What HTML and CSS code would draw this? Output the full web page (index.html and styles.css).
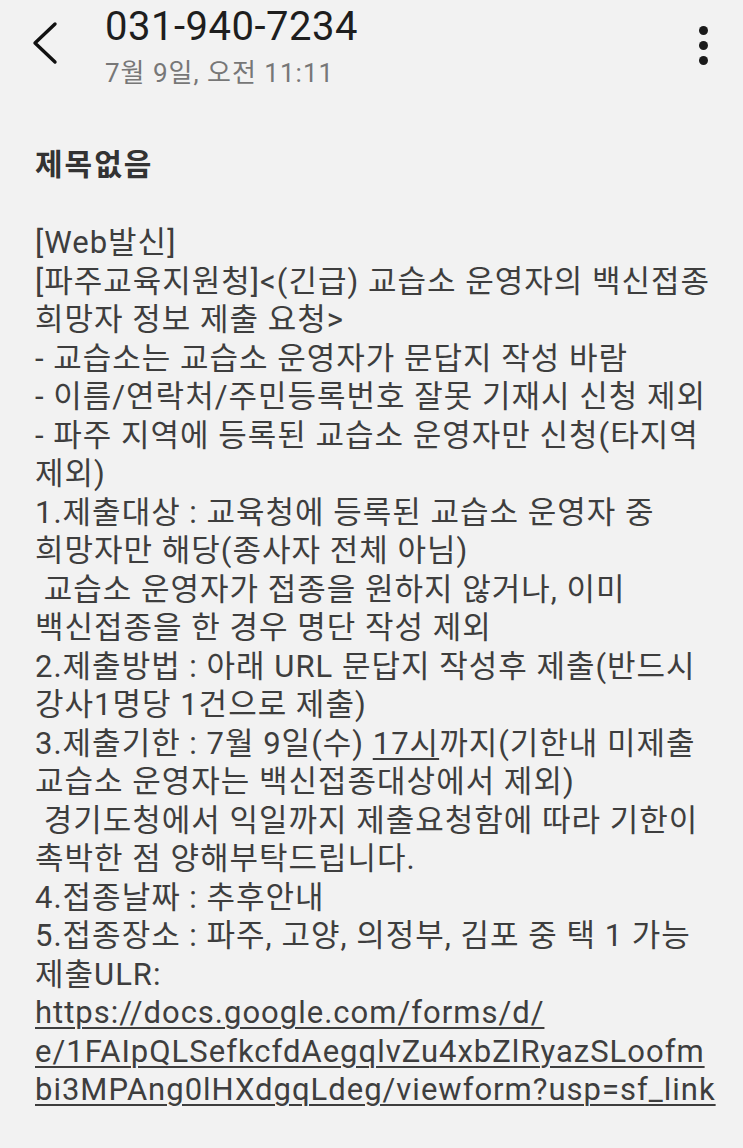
FILE: index.html
```html
<!DOCTYPE html>
<html lang="ko">
<head>
<meta charset="utf-8">
<title>메시지</title>
<link rel="stylesheet" href="styles.css">
</head>
<body>
<div class="screen">
  <header class="topbar">
    <div class="back">
      <svg width="30" height="46" viewBox="0 0 30 46"><path d="M25 3 L5 22 L25 41" fill="none" stroke="#111" stroke-width="3.4" stroke-linecap="round" stroke-linejoin="round"/></svg>
    </div>
    <div class="who">
      <div class="number">031-940-7234</div>
      <div class="date">7월 9일, 오전 11:11</div>
    </div>
    <div class="more">
      <span class="dot"></span><span class="dot"></span><span class="dot"></span>
    </div>
  </header>
  <main class="message">
    <h1 class="subject">제목없음</h1>
    <div class="body">
      <div class="line">[Web발신]</div>
      <div class="line">[파주교육지원청]&lt;(긴급) 교습소 운영자의 백신접종</div>
      <div class="line">희망자 정보 제출 요청&gt;</div>
      <div class="line">- 교습소는 교습소 운영자가 문답지 작성 바람</div>
      <div class="line">- 이름/연락처/주민등록번호 잘못 기재시 신청 제외</div>
      <div class="line">- 파주 지역에 등록된 교습소 운영자만 신청(타지역</div>
      <div class="line">제외)</div>
      <div class="line">1.제출대상 : 교육청에 등록된 교습소 운영자 중</div>
      <div class="line">희망자만 해당(종사자 전체 아님)</div>
      <div class="line">&nbsp;교습소 운영자가 접종을 원하지 않거나, 이미</div>
      <div class="line">백신접종을 한 경우 명단 작성 제외</div>
      <div class="line">2.제출방법 : 아래 URL 문답지 작성후 제출(반드시</div>
      <div class="line">강사1명당 1건으로 제출)</div>
      <div class="line">3.제출기한 : 7월 9일(수) <span class="u">17시</span>까지(기한내 미제출</div>
      <div class="line">교습소 운영자는 백신접종대상에서 제외)</div>
      <div class="line">&nbsp;경기도청에서 익일까지 제출요청함에 따라 기한이</div>
      <div class="line">촉박한 점 양해부탁드립니다.</div>
      <div class="line">4.접종날짜 : 추후안내</div>
      <div class="line">5.접종장소 : 파주, 고양, 의정부, 김포 중 택 1 가능</div>
      <div class="line">제출ULR:</div>
      <div class="line"><span class="u">https://docs.google.com/forms/d/</span></div>
      <div class="line"><span class="u">e/1FAIpQLSefkcfdAegqlvZu4xbZlRyazSLoofm</span></div>
      <div class="line"><span class="u">bi3MPAng0lHXdgqLdeg/viewform?usp=sf_link</span></div>
    </div>
  </main>
</div>
</body>
</html>
```
FILE: styles.css
```css
* { box-sizing: border-box; }
html, body {
  margin: 0;
  padding: 0;
  background: #f2f2f2;
}
body {
  font-family: Roboto, "Noto Sans CJK KR", sans-serif;
  color: #3e3e3e;
}
.screen {
  width: 743px;
  height: 1148px;
  overflow: hidden;
}
.topbar {
  display: flex;
  align-items: flex-start;
  height: 110px;
  padding: 0 0 0 30px;
}
.back {
  width: 75px;
  padding-top: 21px;
}
.who {
  flex: 1;
}
.number {
  font-size: 40px;
  line-height: 42px;
  margin-top: 6px;
  color: #1e1e1e;
  letter-spacing: 0.5px;
}
.date {
  font-size: 26px;
  line-height: 30px;
  margin-top: 10px;
  color: #777;
  letter-spacing: 1px;
}
.more {
  width: 80px;
  display: flex;
  flex-direction: column;
  align-items: center;
  gap: 6px;
  padding-top: 26px;
}
.dot {
  width: 9px;
  height: 9px;
  border-radius: 50%;
  background: #1a1a1a;
}
.message {
  padding: 0 0 0 35px;
}
.subject {
  margin: 36px 0 0 0;
  font-size: 30px;
  line-height: 38px;
  font-weight: 700;
  color: #333;
  letter-spacing: 2px;
}
.body {
  margin-top: 40px;
  font-size: 31px;
  line-height: 38.5px;
  letter-spacing: 1px;
}
.line {
  white-space: nowrap;
}
.u {
  text-decoration: underline;
  text-decoration-thickness: 2px;
  text-underline-offset: 4px;
}
```
